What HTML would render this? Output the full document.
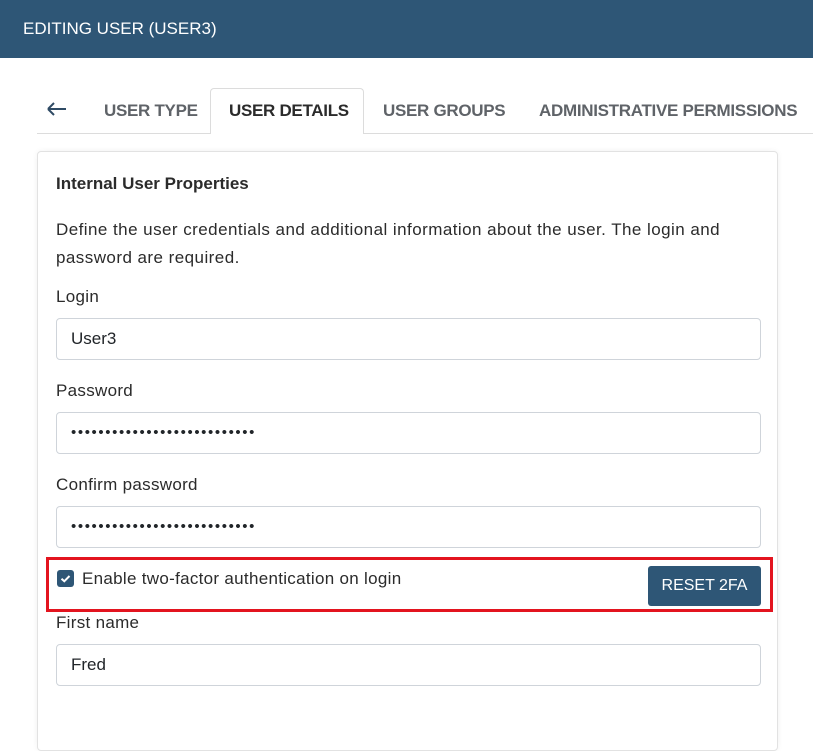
<!DOCTYPE html>
<html><head><meta charset="utf-8"><style>
*{box-sizing:border-box;margin:0;padding:0}
body{width:813px;height:690px;overflow:hidden;background:#fff;font-family:"Liberation Sans",sans-serif;color:#212529;position:relative}
.hdr{position:absolute;left:0;top:0;width:813px;height:58px;background:#2e5676;color:#fff;font-size:17px;line-height:58px;padding-left:23px}
.tabline{position:absolute;left:37px;top:133px;width:776px;height:1px;background:#dcdcdc}
.tab{position:absolute;top:101px;font-size:17px;color:#5f6368;font-weight:bold;letter-spacing:-0.3px}
.act{position:absolute;left:210px;top:88px;width:154px;height:46px;border:1px solid #dcdcdc;border-bottom:none;border-radius:4px 4px 0 0;background:#fff}
.card{position:absolute;left:37px;top:151px;width:741px;height:600px;border:1px solid #e2e2e2;border-radius:4px;box-shadow:0 0 6px rgba(0,0,0,.06)}
.t{position:absolute;font-size:17px;color:#2b2b2b;letter-spacing:0.3px}
.in{position:absolute;left:56px;width:705px;height:42px;border:1px solid #cfd4da;border-radius:4px;font-size:17px;padding-left:14px;line-height:40px}
.dots{letter-spacing:1.6px;font-size:15px}
.red{position:absolute;left:46px;top:557px;width:727px;height:55px;border:3px solid #e3141f}
.btn{position:absolute;left:648px;top:566px;width:113px;height:40px;background:#2e5676;color:#fff;border-radius:3px;font-size:16px;text-align:center;line-height:40px}
.cb{position:absolute;left:57px;top:570px;width:17px;height:17px;background:#2e5676;border-radius:3px}
</style></head><body>
<div class="hdr">EDITING USER (USER3)</div>
<div class="tabline"></div>
<div class="act"></div>
<svg style="position:absolute;left:46px;top:101px" width="22" height="16"><path d="M2 8H20M2 8L8 2M2 8L8 14" stroke="#2e4a64" stroke-width="2" fill="none"/></svg>
<div class="tab" style="left:104px">USER TYPE</div>
<div class="tab" style="left:229px;color:#2b2b2b">USER DETAILS</div>
<div class="tab" style="left:383px">USER GROUPS</div>
<div class="tab" style="left:539px">ADMINISTRATIVE PERMISSIONS</div>
<div class="card"></div>
<div class="t" style="left:56px;top:174px;font-weight:bold;letter-spacing:0">Internal User Properties</div>
<div class="t" style="left:56px;top:216px;line-height:28px;width:700px;letter-spacing:0.45px">Define the user credentials and additional information about the user. The login and password are required.</div>
<div class="t" style="left:56px;top:287px">Login</div>
<div class="in" style="top:318px">User3</div>
<div class="t" style="left:56px;top:381px">Password</div>
<div class="in dots" style="top:412px">•••••••••••••••••••••••••••</div>
<div class="t" style="left:56px;top:475px">Confirm password</div>
<div class="in dots" style="top:506px">•••••••••••••••••••••••••••</div>
<div class="red"></div>
<div class="cb"><svg width="17" height="17"><path d="M4.5 8.8L7.3 11.3L12.5 6" stroke="#fff" stroke-width="2" fill="none"/></svg></div>
<div class="t" style="left:82px;top:569px">Enable two-factor authentication on login</div>
<div class="btn">RESET 2FA</div>
<div class="t" style="left:56px;top:613px">First name</div>
<div class="in" style="top:644px">Fred</div>
</body></html>
